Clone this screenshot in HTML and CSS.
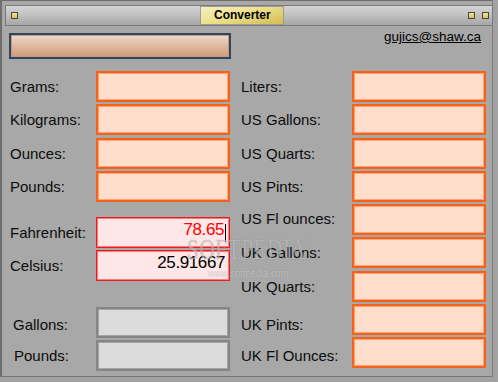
FILE: index.html
```html
<!DOCTYPE html>
<html>
<head>
<meta charset="utf-8">
<title>Converter</title>
<link rel="stylesheet" href="styles.css">
</head>
<body>
<div class="screen">
  <div class="window">
    <div class="titlebar">
      <span class="tbtn"></span>
      <span class="title">Converter</span>
      <span class="tbtns"><span class="tbtn"></span><span class="tbtn"></span></span>
    </div>
    <div class="top">
      <div class="bar"></div>
      <a class="email" href="#">gujics@shaw.ca</a>
    </div>
    <div class="form">
      <div class="col left">
        <div class="row"><span class="lbl">Grams:</span><div class="field orange"></div></div>
        <div class="row m2"><span class="lbl">Kilograms:</span><div class="field orange"></div></div>
        <div class="row m3"><span class="lbl">Ounces:</span><div class="field orange"></div></div>
        <div class="row m2"><span class="lbl">Pounds:</span><div class="field orange"></div></div>
        <div class="row m15"><span class="lbl">Fahrenheit:</span><div class="field red active"><span class="val red-text">78.65</span><span class="caret"></span></div></div>
        <div class="row m2"><span class="lbl">Celsius:</span><div class="field red"><span class="val">25.91667</span></div></div>
        <div class="row m26"><span class="lbl in3 down3">Gallons:</span><div class="field gray"></div></div>
        <div class="row m2"><span class="lbl in4">Pounds:</span><div class="field gray"></div></div>
      </div>
      <div class="col right">
        <div class="row"><span class="lbl">Liters:</span><div class="field orange"></div></div>
        <div class="row m2"><span class="lbl">US Gallons:</span><div class="field orange"></div></div>
        <div class="row m3"><span class="lbl">US Quarts:</span><div class="field orange"></div></div>
        <div class="row m2"><span class="lbl">US Pints:</span><div class="field orange"></div></div>
        <div class="row m2"><span class="lbl up3">US Fl ounces:</span><div class="field orange"></div></div>
        <div class="row m2"><span class="lbl">UK Gallons:</span><div class="field orange"></div></div>
        <div class="row m3"><span class="lbl">UK Quarts:</span><div class="field orange"></div></div>
        <div class="row m2"><span class="lbl down9">UK Pints:</span><div class="field orange"></div></div>
        <div class="row m2"><span class="lbl down5">UK Fl Ounces:</span><div class="field orange"></div></div>
      </div>
    </div>
  </div>
  <div class="watermark">
    <span class="wm-big">SOFTPEDIA<span class="tm">™</span></span>
    <span class="wm-url">www.softpedia.com</span>
  </div>
</div>
</body>
</html>
```

FILE: styles.css
```css
* { box-sizing: border-box; }
html, body { margin: 0; padding: 0; }
body {
  background: #a2a2a2;
  font-family: "Liberation Sans", Arial, sans-serif;
  color: #000;
}
.screen {
  position: relative;
  width: 498px;
  height: 382px;
  overflow: hidden;
  background: #a2a2a2;
}
.window {
  width: 493px;
  height: 377px;
  background: #a8a8a8;
  border-left: 2px solid #6e6e6e;
  border-top: 1px solid #6e6e6e;
  border-right: 1px solid #7c7c7c;
  border-bottom: 1px solid #767676;
  display: flex;
  flex-direction: column;
}

/* title bar */
.titlebar {
  margin: 4px 0 0 3px;
  width: 488px;
  height: 21px;
  border: 1px solid #7a7a7a;
  background: linear-gradient(#d4d4d4, #c2c2c2 45%, #a6a6a6);
  display: flex;
  align-items: center;
  padding: 0 3px 0 5px;
}
.tbtn {
  display: block;
  width: 7px;
  height: 7px;
  border: 1px solid #46463a;
  background: linear-gradient(#f2e69a, #d4c060);
}
.title {
  margin-left: 182px;
  height: 19px;
  padding: 0 12px 0 13px;
  border: 1px solid #9c9c9c;
  background: linear-gradient(165deg, #f6f0c0 0%, #ece08c 45%, #d2bc52 100%);
  font-weight: bold;
  font-size: 12px;
  line-height: 17px;
  color: #000;
}
.tbtns {
  margin-left: auto;
  display: flex;
  gap: 7px;
}

/* top row */
.top {
  margin-top: 7px;
  display: flex;
  align-items: flex-start;
  padding-left: 7px;
}
.bar {
  width: 222px;
  height: 26px;
  border: 2px solid #274868;
  box-shadow: inset 0 0 0 1px #d8946a;
  background: linear-gradient(#eed8cc, #e0b8a0 50%, #d09a78);
}
.email {
  margin-left: auto;
  margin-right: 11px;
  margin-top: -4px;
  font-size: 13.5px;
  line-height: 16px;
  color: #000;
  text-decoration: underline;
}

/* form */
.form {
  margin-top: 12px;
  display: flex;
  gap: 11px;
  padding-left: 8px;
}
.col {
  display: flex;
  flex-direction: column;
}
.col.left { width: 220px; }
.col.right { width: 245px; }
.row {
  display: flex;
  align-items: center;
  height: 31px;
}
.m2 { margin-top: 2px; }
.m3 { margin-top: 3px; }
.m15 { margin-top: 15px; }
.m26 { margin-top: 26px; }
.lbl {
  font-size: 15px;
  line-height: 17px;
  white-space: nowrap;
  color: #0c0c0c;
}
.left .lbl { width: 86px; }
.right .lbl { width: 111px; }
.in3 { padding-left: 3px; }
.in4 { padding-left: 4px; }
.down3 { padding-top: 3px; }
.down5 { padding-top: 5px; }
.down9 { padding-top: 9px; }
.up3 { padding-bottom: 3px; }

.field {
  width: 134px;
  height: 31px;
  display: flex;
  align-items: center;
  justify-content: flex-end;
  padding: 0 4px 7px 0;
}
.field.orange {
  border: 2px solid #f76218;
  box-shadow: inset 0 0 0 1px #ffa47a;
  background: #ffdfcb;
}
.field.red {
  border: 1px solid #ec1c1c;
  box-shadow: inset 0 0 0 1px #ff7a7a;
  background: #ffe7e7;
}
.field.gray {
  border: 2px solid #858585;
  box-shadow: inset 0 0 0 1px #a4a4a4;
  background: #dcdcdc;
}
.field.active { padding-right: 3px; }
.val {
  font-size: 17px;
  line-height: 19px;
  letter-spacing: -0.4px;
  color: #000;
}
.red-text { color: #ff0000; }
.caret {
  display: block;
  width: 1px;
  height: 18px;
  margin: 7px 0 0 1px;
  background: #000;
}

/* watermark overlay */
.watermark {
  position: absolute;
  left: 187px;
  top: 227px;
  pointer-events: none;
}
.wm-big {
  display: block;
  font-family: "Liberation Serif", "Times New Roman", serif;
  font-size: 30px;
  line-height: 30px;
  letter-spacing: 1px;
  color: rgba(255, 255, 255, 0.45);
  text-shadow: 0 0 1px rgba(50, 50, 50, 0.45);
  transform: scaleX(0.7);
  transform-origin: left top;
  white-space: nowrap;
}
.tm {
  font-size: 10px;
  vertical-align: 14px;
  font-family: "Liberation Sans", Arial, sans-serif;
}
.wm-url {
  display: block;
  margin: 3px 0 0 21px;
  font-family: "Liberation Sans", Arial, sans-serif;
  font-size: 11px;
  line-height: 12px;
  color: rgba(255, 255, 255, 0.45);
  text-shadow: 0 0 1px rgba(50, 50, 50, 0.3);
  transform: scaleX(0.85);
  transform-origin: left top;
  white-space: nowrap;
}
```
